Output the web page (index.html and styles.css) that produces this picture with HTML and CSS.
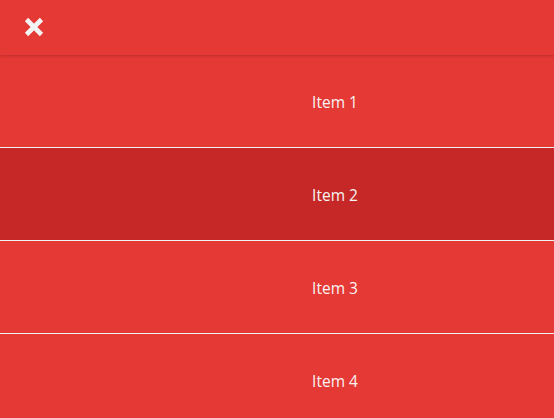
FILE: index.html
```html
<!DOCTYPE html>
<html>
<head>
<meta charset="utf-8">
<link rel="stylesheet" href="styles.css">
</head>
<body>
<div class="menu">
  <header class="bar">
    <svg class="close" width="20" height="20" viewBox="0 0 20 20">
      <path d="M2.5 2.5 L17.5 17.5 M17.5 2.5 L2.5 17.5" stroke="#f4f4f4" stroke-width="4.6" stroke-linecap="butt" fill="none"/>
    </svg>
  </header>
  <ul class="items">
    <li class="item">Item 1</li>
    <li class="item active">Item 2</li>
    <li class="item">Item 3</li>
    <li class="item">Item 4</li>
  </ul>
</div>
</body>
</html>
```
FILE: styles.css
```css
html, body {
  margin: 0;
  padding: 0;
  background: #e53935;
  overflow: hidden;
}
.menu {
  width: 554px;
  height: 418px;
  background: #e53935;
  font-family: "Open Sans", "Liberation Sans", sans-serif;
}
.bar {
  height: 55px;
  display: flex;
  align-items: center;
  padding-left: 24px;
  box-sizing: border-box;
  background: #e53935;
  box-shadow: 0 1px 3px rgba(0, 0, 0, 0.18);
  position: relative;
  z-index: 1;
}
.close {
  display: block;
  margin-top: -1px;
}
.items {
  list-style: none;
  margin: 0;
  padding: 0;
}
.item {
  height: 92px;
  box-sizing: border-box;
  padding-top: 2px;
  border-bottom: 1px solid #f3f3f3;
  display: flex;
  align-items: center;
  justify-content: center;
  padding-left: 116px;
  color: #f7f4f4;
  font-size: 15.5px;
}
.item {
  height: 93px;
}
.item.active {
  background: #c62828;
}
```
